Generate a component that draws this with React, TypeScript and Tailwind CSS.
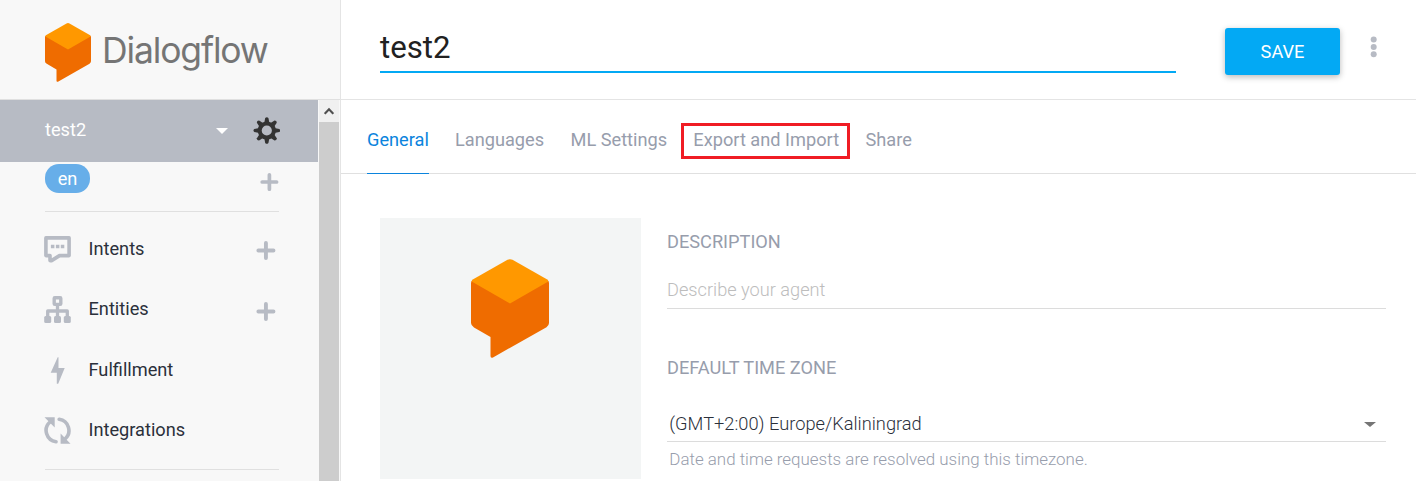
import React from 'react';

type IconProps = { className?: string };

function Cube({ className }: IconProps) {
  return (
    <svg viewBox="0 0 78 99" className={className} preserveAspectRatio="none">
      <path
        fill="#ef6c00"
        d="M0 24 Q0 21.500 2 21 L39 20 L76 21 Q78 21.500 78 24 V64 Q78 66.500 75.500 68.200 L22 98.500 Q19.500 99.500 19.500 97 V78 L3 68.500 Q0 66.500 0 64Z"
      />
      <path
        fill="#ff9800"
        d="M2.200 20.300 L36.500 0.800 Q39 -0.500 41.500 0.800 L75.800 20.300 Q77 21.200 77.300 22.500 L39 44.500 L0.700 22.500 Q1 21.200 2.200 20.300Z"
      />
    </svg>
  );
}

function Gear({ className }: IconProps) {
  return (
    <svg viewBox="-13.800 -13.500 27 27" className={className}>
      <circle r="7.100" fill="none" stroke="#333" strokeWidth="4" />
      {[0, 45, 90, 135, 180, 225, 270, 315].map((angle) => (
        <path key={angle} d="M-2.600 -7.500 L-1.600 -12.500 Q0 -14.200 1.600 -12.500 L2.600 -7.500Z" fill="#333" transform={`rotate(${angle})`} />
      ))}
    </svg>
  );
}

function Plus({ className }: IconProps) {
  return (
    <svg viewBox="0 0 20 20" className={className}>
      <path d="M10.400 2.800V17.200M3.200 10H17.600" stroke="#b7bbc4" strokeWidth="3.700" strokeLinecap="round" />
    </svg>
  );
}

function IntentsIcon() {
  return (
    <svg viewBox="0 0 27 27" className="size-[27px]">
      <path d="M1.900 1.900H25.100V19.600H15.500L7.500 24.600H6V19.600H1.900Z" fill="none" stroke="#b7bbc4" strokeWidth="3.600" strokeLinejoin="round" />
      <path d="M6.900 8.700h3.500v3.500H6.900zM11.900 8.700h3.500v3.500h-3.500zM16.800 8.700h3.500v3.500h-3.500z" fill="#b7bbc4" />
    </svg>
  );
}

function EntitiesIcon() {
  return (
    <svg viewBox="0 0 27 27" className="size-[27px]">
      <rect x="10.200" y="1.800" width="6.600" height="6.600" rx="0.600" fill="none" stroke="#b7bbc4" strokeWidth="3.400" />
      <path d="M13.500 9V21M3.700 21V15H23.300V21" fill="none" stroke="#b7bbc4" strokeWidth="3.300" strokeLinejoin="round" />
      <g fill="#b7bbc4">
        <rect x="0.200" y="20" width="7" height="7" rx="1.500" />
        <rect x="10" y="20" width="7" height="7" rx="1.500" />
        <rect x="19.800" y="20" width="7" height="7" rx="1.500" />
      </g>
    </svg>
  );
}

function BoltIcon() {
  return (
    <svg viewBox="0 0 27 27" className="size-[27px]">
      <path d="M13.700 0.300L6.700 15.800H12.800V26.800H14.200L20.700 11H14.500V0.300Z" fill="#b7bbc4" />
    </svg>
  );
}

function SyncIcon() {
  return (
    <svg viewBox="0 0 27 27" className="size-[27px]">
      <g fill="none" stroke="#b7bbc4" strokeWidth="3.600" strokeLinecap="round">
        <path d="M6 5A11.300 11.300 0 0 0 12 24.700" />
        <path d="M15.200 2.300A11.300 11.300 0 0 1 21 22" />
      </g>
      <path d="M0.500 0.200H10.700V10.500ZM26.500 26.800H16.600V16.500Z" fill="#b7bbc4" />
    </svg>
  );
}

function MenuItem({ icon, label, add, className }: { icon: React.ReactNode; label: string; add?: string; className: string }) {
  return (
    <div className={`flex items-center pl-[44px] pr-[42px] ${className}`}>
      {icon}
      <span className="ml-[17.500px] text-[18.200px] text-[#2b303b]">{label}</span>
      {add && <Plus className={`ml-auto size-[21px] ${add}`} />}
    </div>
  );
}

function Sidebar() {
  return (
    <aside className="flex h-[481px] w-[341px] flex-none flex-col border-r border-[#e4e4e4] bg-[#f8f8f8]">
      <div className="flex h-[100px] flex-none items-start border-b border-[#e0e0e0] pl-[45px]">
        <Cube className="mt-[23px] h-[59px] w-[46px]" />
        <span className="ml-[11px] mt-[28px] font-[Inter,sans-serif] text-[35.500px] leading-[46px] tracking-[-1.150px] text-[#757575]">Dialogflow</span>
      </div>
      <div className="flex min-h-0 flex-1">
        <nav className="w-[318px]">
          <div className="flex h-[62px] items-center bg-[#b7bbc4] pl-[45px] pr-[38px]">
            <span className="-mt-[2px] text-[18.200px] text-white">test2</span>
            <svg viewBox="0 0 12 6" className="ml-auto h-[6px] w-[12px]"><path d="M0 0H12L6 6Z" fill="#fff" /></svg>
            <Gear className="-mt-[1px] ml-[25px] size-[27px]" />
          </div>
          <div className="ml-[45px] flex h-[50px] w-[234px] items-start justify-between border-b border-[#e0e0e0] pt-[2px]">
            <span className="flex h-[29px] w-[45px] items-center justify-center rounded-[14px] bg-[#67aee9] text-[18.200px] text-white">en</span>
            <Plus className="mt-[8px] size-[20px]" />
          </div>
          <MenuItem icon={<IntentsIcon />} label="Intents" add="mt-[2px]" className="mt-[7px] h-[60px]" />
          <MenuItem icon={<EntitiesIcon />} label="Entities" add="mt-[4px]" className="h-[60px]" />
          <MenuItem icon={<BoltIcon />} label="Fulfillment" className="mt-[1px] h-[60px]" />
          <MenuItem icon={<SyncIcon />} label="Integrations" className="h-[60px]" />
          <div className="ml-[45px] mt-[9px] h-px w-[234px] bg-[#e0e0e0]" />
        </nav>
        <div className="ml-px flex w-[20px] flex-col bg-[#cdcdcd]">
          <div className="flex h-[22px] items-center justify-center bg-[#f0f0f0]">
            <svg viewBox="0 0 10 8" className="h-[8px] w-[10px]"><path d="M0.700 6.800L5 2.300L9.300 6.800" fill="none" stroke="#505050" strokeWidth="2.200" /></svg>
          </div>
        </div>
      </div>
    </aside>
  );
}

export default function App() {
  return (
    <div className="flex h-[490px] w-[1416px] overflow-hidden bg-white font-[Roboto,sans-serif] leading-[24px]">
      <Sidebar />
      <main className="flex min-w-0 flex-1 flex-col">
        <header className="flex h-[100px] flex-none items-start border-b border-[#e4e4e4] pl-[39px]">
          <div className="h-[73px] w-[796px] border-b-2 border-[#03a9f4] pt-[28px] text-[31.200px] leading-[40px] text-[#212121]">test2</div>
          <button className="ml-[49px] mt-[28px] h-[47px] w-[115px] rounded-[3px] bg-[#03a9f4] text-[18.200px] text-white shadow-[0_2px_6px_rgba(0,0,0,0.28)]">SAVE</button>
          <svg viewBox="0 0 8 22" className="ml-[30px] mt-[36px] h-[22px] w-[8px]" fill="#b7bbc4">
            <circle cx="3.700" cy="3.500" r="3" /><circle cx="3.700" cy="10.900" r="3" /><circle cx="3.700" cy="18.200" r="3" />
          </svg>
        </header>
        <div className="flex h-[74px] flex-none items-start border-b border-[#e0e0e0] pl-[26px] text-[18.200px] text-[#979dac]">
          <div className="h-[74px] w-[62px] border-b border-[#0b84dd] pt-[28px] text-[#0b84dd]">General</div>
          <div className="ml-[26px] w-[90px] pt-[28px]">Languages</div>
          <div className="ml-[25.500px] w-[97.500px] whitespace-nowrap pt-[28px]">ML Settings</div>
          <div className="ml-[13px] mt-[23px] flex h-[36px] w-[169px] items-center justify-center whitespace-nowrap border-[3px] border-[#f01c24]"><span className="-mt-[2px] ml-[1.500px]">Export and Import</span></div>
          <div className="ml-[15.500px] pt-[28px]">Share</div>
        </div>
        <section className="flex items-start pl-[39px] pt-[44px]">
          <div className="flex h-[261px] w-[261px] bg-[#f3f5f5] pl-[91px]">
            <Cube className="mt-[41px] h-[99px] w-[78px]" />
          </div>
          <div className="ml-[26px] w-[719px] pt-[12px] text-[18.200px]">
            <div className="text-[#979dac]">DESCRIPTION</div>
            <div className="mt-[24px] h-[31px] border-b border-[#dcdcdc] font-light text-[#bdbdbd]">Describe your agent</div>
            <div className="mt-[47px] text-[#979dac]">DEFAULT TIME ZONE</div>
            <div className="mt-[32px] flex h-[30px] items-start justify-between border-b border-[#dcdcdc] pl-[2.300px] pr-[10px]">
              <span className="text-[18.250px] font-light text-[#2b303b]">(GMT+2:00) Europe/Kaliningrad</span>
              <svg viewBox="0 0 12 5" className="mt-[10px] h-[5px] w-[12px]"><path d="M0 0H12L6 5Z" fill="#757575" /></svg>
            </div>
            <div className="mt-[5px] pl-[2.300px] text-[16.930px] font-light text-[#979dac]">Date and time requests are resolved using this timezone.</div>
          </div>
        </section>
      </main>
    </div>
  );
}
